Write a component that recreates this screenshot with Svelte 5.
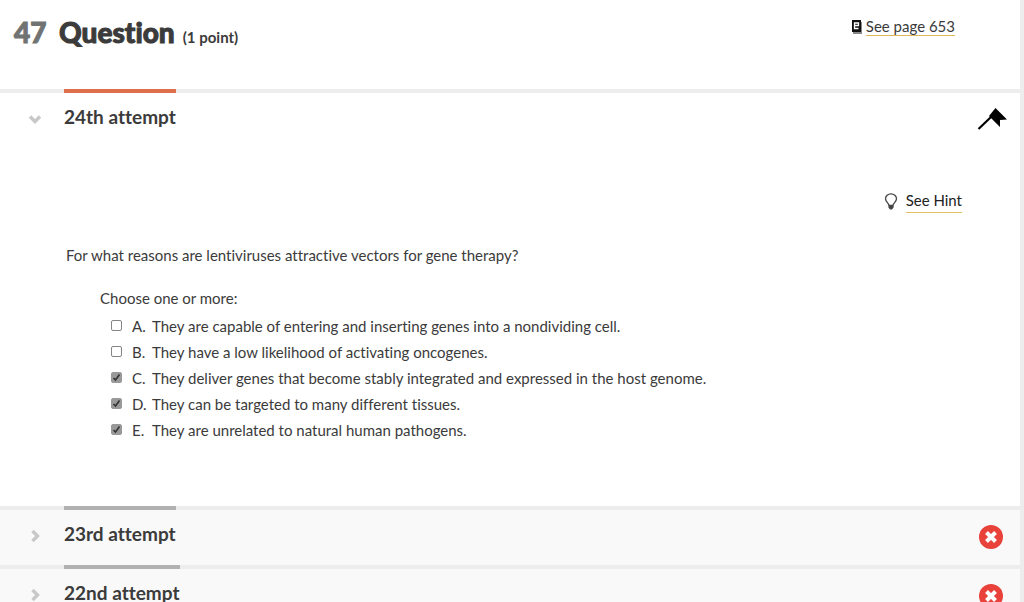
<script lang="ts">
  interface Choice {
    letter: string;
    text: string;
    checked: boolean;
  }

  let choices: Choice[] = $state([
    { letter: "A", text: "They are capable of entering and inserting genes into a nondividing cell.", checked: false },
    { letter: "B", text: "They have a low likelihood of activating oncogenes.", checked: false },
    { letter: "C", text: "They deliver genes that become stably integrated and expressed in the host genome.", checked: true },
    { letter: "D", text: "They can be targeted to many different tissues.", checked: true },
    { letter: "E", text: "They are unrelated to natural human pathogens.", checked: true },
  ]);

  const attempts = ["24th attempt", "23rd attempt", "22nd attempt"];
  let openIndex = $state(0);

  function toggle(i: number) {
    openIndex = openIndex === i ? -1 : i;
  }
</script>

<main class="assignment">
  <header class="question-header">
    <h1>
      <span class="number">47</span>
      <span class="title">Question</span>
      <span class="points">(1 point)</span>
    </h1>
    <a class="page-link" href="#page-653">
      <svg width="11" height="15" viewBox="0 0 11 15" aria-hidden="true">
        <path d="M2 3h9v12H2z" fill="#888" />
        <path d="M1 1h9v12H1z" fill="#111" />
        <path d="M3.500 6.500h4V4h-4v5.500h4" fill="none" stroke="#fff" stroke-width="1.300" />
      </svg>
      <span>See page 653</span>
    </a>
  </header>

  {#each attempts as attempt, i (attempt)}
    <section class="attempt" class:open={openIndex === i}>
      <div class="attempt-bar">
        <button type="button" aria-expanded={openIndex === i} onclick={() => toggle(i)}>
          <svg class="chevron" width="14" height="14" viewBox="0 0 14 14" aria-hidden="true">
            <path d="M4.500 2 9.500 7l-5 5" fill="none" stroke="#c8c8c8" stroke-width="3.400" />
          </svg>
          <span class="attempt-title">{attempt}</span>
        </button>
        {#if i === 0}
          <svg class="status pin" width="30" height="22" viewBox="0 0 30 22" aria-hidden="true">
            <path d="M1.500 21 14 9" stroke="#000" stroke-width="2.200" />
            <path d="M18.500 0 30 11.500l-7 .5v7L12 8z" fill="#000" />
          </svg>
        {:else}
          <svg class="status" width="24" height="24" viewBox="0 0 24 24" role="img" aria-label="Incorrect">
            <circle cx="12" cy="12" r="12" fill="#e8423a" />
            <path d="m7.500 7.500 9 9m0-9-9 9" stroke="#fff" stroke-width="4" />
          </svg>
        {/if}
      </div>

      {#if openIndex === i}
        <div class="attempt-body">
          <div class="hint">
            <svg width="14" height="17" viewBox="0 0 14 17" aria-hidden="true">
              <path
                d="M5 12.500C5 10 1.500 9 1.500 5.800a5.500 5 0 0 1 11 0C12.500 9 9 10 9 12.500z"
                fill="none"
                stroke="#444"
                stroke-width="1.300"
              />
              <path d="M4.500 12.500h5v2L8 16.500H6l-1.500-2z" fill="#444" />
            </svg>
            <a href="#hint">See Hint</a>
          </div>
          <p>For what reasons are lentiviruses attractive vectors for gene therapy?</p>
          <fieldset>
            <legend>Choose one or more:</legend>
            {#each choices as choice (choice.letter)}
              <label>
                <input type="checkbox" bind:checked={choice.checked} />
                <span class="letter">{choice.letter}.</span>
                <span>{choice.text}</span>
              </label>
            {/each}
          </fieldset>
        </div>
      {/if}
    </section>
  {/each}
</main>

<style>
  :global(body) {
    background: #fff;
    scrollbar-width: none;
  }

  .assignment {
    border-right: 4px solid #ededed;
    color: #3b3b3b;
    font-family: Lato, sans-serif;
    font-size: 15px;
    font-variant-ligatures: none;
    line-height: 20px;
  }

  .question-header {
    display: flex;
    justify-content: space-between;
    align-items: flex-start;
    height: 74px;
    padding: 15px 65px 0 14px;
  }

  h1 {
    display: flex;
    align-items: baseline;
    margin: 0;
    font-size: 28px;
    font-weight: 900;
    line-height: 34px;
  }

  .number {
    width: 45px;
    color: #707372;
  }

  .number,
  .title {
    -webkit-text-stroke: 1px currentColor;
  }

  .points {
    margin-left: 8px;
    font-size: 15px;
    font-weight: 700;
  }

  .page-link {
    display: flex;
    align-items: center;
    gap: 4px;
    margin-top: 2px;
    color: #3b3b3b;
    text-decoration: none;
  }

  .page-link span {
    border-bottom: 1px solid #deb65c;
    line-height: 18px;
  }

  .attempt {
    border-top: 4px solid #ededed;
    background: #f9f9f9;
  }

  .attempt.open {
    background: #fff;
  }

  .attempt-bar {
    display: flex;
    justify-content: space-between;
    align-items: flex-start;
    height: 55px;
  }

  button {
    display: flex;
    align-items: flex-start;
    margin-top: -4px;
    padding: 0;
    border: 0;
    background: none;
    color: inherit;
    font: inherit;
    font-variant-ligatures: none;
    cursor: pointer;
  }

  .chevron {
    margin: 23px 22px 0 28px;
  }

  .open .chevron {
    transform: rotate(90deg);
  }

  .attempt-title {
    padding-top: 12px;
    border-top: 4px solid #b1b1b1;
    font-size: 19px;
    font-weight: 700;
    line-height: 24px;
  }

  .open .attempt-title {
    border-color: #de6e4c;
  }

  .status {
    margin: 15px 17px 0 0;
  }

  .pin {
    margin-right: 13px;
  }

  .attempt-body {
    padding: 41px 58px 63px 66px;
  }

  .hint {
    display: flex;
    justify-content: flex-end;
    align-items: center;
    gap: 8px;
  }

  .hint a {
    border-bottom: 1px solid #e3bf65;
    color: #222;
    line-height: 23px;
    text-decoration: none;
  }

  p {
    margin: 32px 0 23px;
  }

  fieldset {
    margin: 0 0 0 34px;
    padding: 0;
    border: 0;
  }

  legend {
    margin-bottom: 5px;
    padding: 0;
  }

  label {
    display: flex;
    align-items: center;
    line-height: 26px;
  }

  input {
    appearance: none;
    flex: none;
    width: 11px;
    height: 11px;
    margin: 0 10px 2px 11px;
    border: 1px solid #858585;
    border-radius: 2px;
    background: #fff;
  }

  input:checked {
    border-color: #999;
    background: #999 url("data:image/svg+xml,%3Csvg xmlns='http://www.w3.org/2000/svg' viewBox='0 0 9 9'%3E%3Cpath d='M1.500 5 3.500 7 7.500 1.500' fill='none' stroke='%23333' stroke-width='1.600'/%3E%3C/svg%3E") center / 9px no-repeat;
  }

  .letter {
    width: 20px;
  }
</style>
